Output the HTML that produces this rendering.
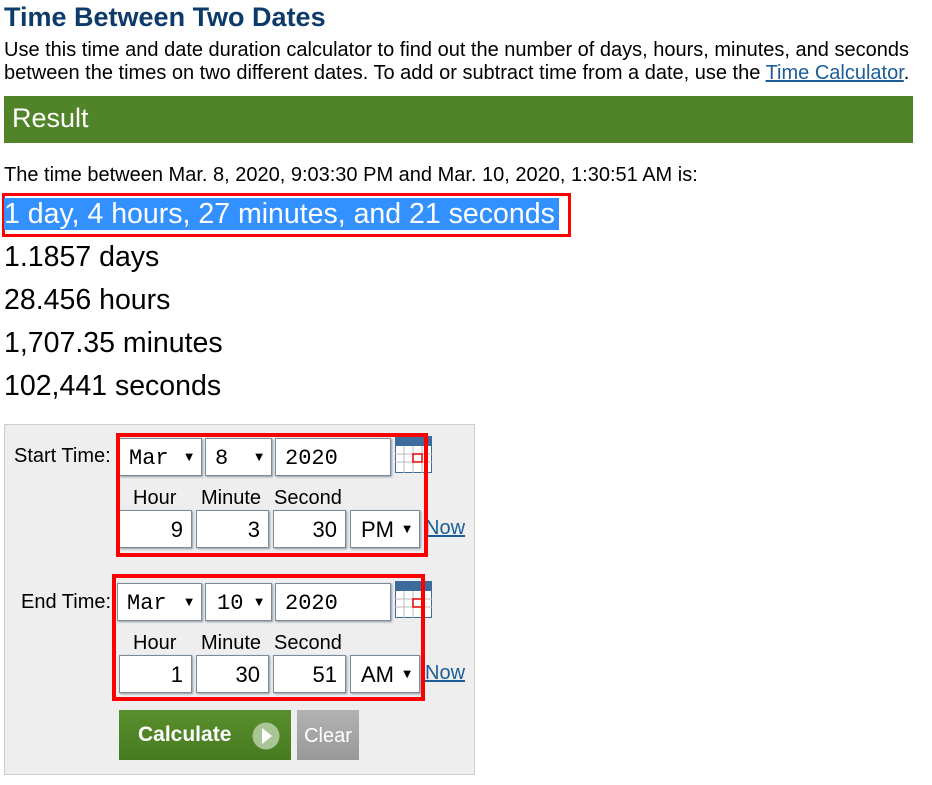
<!DOCTYPE html>
<html><head><meta charset="utf-8"><style>
*{margin:0;padding:0;box-sizing:border-box}
body{width:932px;height:785px;background:#fff;font-family:"Liberation Sans",Arial,sans-serif;color:#000;position:relative;overflow:hidden}
.a{position:absolute;white-space:nowrap}
h1{position:absolute;left:4px;top:2px;font-size:27px;font-weight:bold;color:#0c3a6b}
.p{left:4px;font-size:20px;line-height:23px}
a{color:#1a5d99;text-decoration:underline}
.bar{left:4px;top:96px;width:909px;height:47px;background:#518328;color:#fff;font-size:27px;padding:7px 0 0 8px}
.big{left:4px;font-size:28.5px}
.panel{left:4px;top:424px;width:471px;height:351px;background:#eee;border:1px solid #ccc}
.red{position:absolute;border:4px solid #f00}
.f{position:absolute;background:#fff;border:1px solid #7d8a98;box-shadow:1px 1px 2px #8a97a5;font-size:22px;height:38px;line-height:38px}
.mono{font-family:"Liberation Mono",monospace;font-size:22px;padding-left:9px;line-height:40px}
.sel::after{content:"▼";position:absolute;right:8px;top:0;font-size:10px;line-height:38px;font-family:"DejaVu Sans",sans-serif}
.num{text-align:right;padding-right:8px}
.lbl{position:absolute;font-size:20px}
.cal{position:absolute;width:37px;height:37px}
</style></head><body>
<h1>Time Between Two Dates</h1>
<div class="a p" style="top:39px">Use this time and date duration calculator to find out the number of days, hours, minutes, and seconds</div>
<div class="a p" style="top:62px">between the times on two different dates. To add or subtract time from a date, use the <a>Time Calculator</a>.</div>
<div class="a bar">Result</div>
<div class="a" style="left:4px;top:164px;font-size:20px">The time between Mar. 8, 2020, 9:03:30 PM and Mar. 10, 2020, 1:30:51 AM is:</div>
<div class="a" style="left:2px;top:193px;width:569px;height:44px;border:3px solid #f00"></div>
<div class="a big" style="left:4px;top:198px;width:555px;height:32px;background:#3390ff;color:#fff;line-height:32px">1 day, 4 hours, 27 minutes, and 21 seconds</div>
<div class="a big" style="top:241px">1.1857 days</div>
<div class="a big" style="top:284px">28.456 hours</div>
<div class="a big" style="top:327px">1,707.35 minutes</div>
<div class="a big" style="top:370px">102,441 seconds</div>

<div class="a panel"></div>
<div class="lbl" style="left:14px;top:445px">Start Time:</div>
<div class="f mono sel" style="left:119px;top:438px;width:83px">Mar</div>
<div class="f mono sel" style="left:205px;top:438px;width:67px">8</div>
<div class="f mono" style="left:275px;top:438px;width:116px">2020</div>
<svg class="cal" style="left:395px;top:436px" viewBox="0 0 37 37"><rect x="0.5" y="0.5" width="36" height="36" fill="#fff" stroke="#3d6b9c"/><rect x="0" y="0" width="37" height="10" fill="#3d6b9c"/><g stroke="#bbb"><path d="M0 18H37M0 26H37M9 10V37M18 10V37M27 10V37"/></g><rect x="18" y="18" width="9" height="8" fill="none" stroke="#e00" stroke-width="1.5"/></svg>
<div class="lbl" style="left:133px;top:487px">Hour</div>
<div class="lbl" style="left:201px;top:487px">Minute</div>
<div class="lbl" style="left:274px;top:487px">Second</div>
<div class="f num" style="left:119px;top:510px;width:73px">9</div>
<div class="f num" style="left:196px;top:510px;width:73px">3</div>
<div class="f num" style="left:273px;top:510px;width:73px">30</div>
<div class="f sel" style="left:350px;top:510px;width:70px;padding-left:10px">PM</div>
<a class="a" style="left:425px;top:517px;font-size:20px">Now</a>
<div class="red" style="left:116px;top:433px;width:312px;height:124px"></div>

<div class="lbl" style="left:21px;top:591px">End Time:</div>
<div class="f mono sel" style="left:117px;top:583px;width:85px">Mar</div>
<div class="f mono sel" style="left:205px;top:583px;width:67px;padding-left:11px">10</div>
<div class="f mono" style="left:275px;top:583px;width:116px">2020</div>
<svg class="cal" style="left:395px;top:581px" viewBox="0 0 37 37"><rect x="0.5" y="0.5" width="36" height="36" fill="#fff" stroke="#3d6b9c"/><rect x="0" y="0" width="37" height="10" fill="#3d6b9c"/><g stroke="#bbb"><path d="M0 18H37M0 26H37M9 10V37M18 10V37M27 10V37"/></g><rect x="18" y="18" width="9" height="8" fill="none" stroke="#e00" stroke-width="1.5"/></svg>
<div class="lbl" style="left:133px;top:632px">Hour</div>
<div class="lbl" style="left:201px;top:632px">Minute</div>
<div class="lbl" style="left:274px;top:632px">Second</div>
<div class="f num" style="left:119px;top:655px;width:73px">1</div>
<div class="f num" style="left:196px;top:655px;width:73px">30</div>
<div class="f num" style="left:273px;top:655px;width:73px">51</div>
<div class="f sel" style="left:350px;top:655px;width:70px;padding-left:10px">AM</div>
<a class="a" style="left:425px;top:662px;font-size:20px">Now</a>
<div class="red" style="left:112px;top:574px;width:313px;height:127px"></div>

<div class="a" style="left:119px;top:710px;width:172px;height:50px;background:linear-gradient(#5a8f2e,#467a1f);color:#fff;font-weight:bold;font-size:21px;line-height:50px;padding-left:19px">Calculate</div>
<svg class="a" style="left:252px;top:722px" width="28" height="28" viewBox="0 0 28 28"><circle cx="14" cy="14" r="13.5" fill="#a9c598"/><path d="M10 6L20 14L10 22Z" fill="#fff"/></svg>
<div class="a" style="left:297px;top:710px;width:62px;height:50px;background:linear-gradient(#b2b2b2,#999);color:#fff;font-size:20px;line-height:52px;text-align:center">Clear</div>
</body></html>
